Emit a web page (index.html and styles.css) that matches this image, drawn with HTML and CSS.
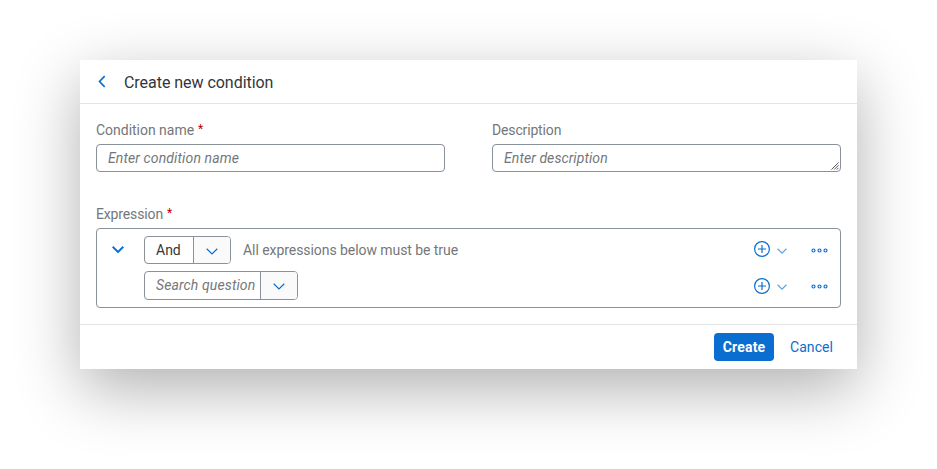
FILE: index.html
```html
<!DOCTYPE html>
<html lang="en">
<head>
<meta charset="utf-8">
<title>Create new condition</title>
<link rel="stylesheet" href="styles.css">
</head>
<body>
<svg class="sprite" aria-hidden="true">
  <symbol id="chevron" viewBox="0 0 12 7"><path d="M.7.8 6 6 11.3.8"/></symbol>
  <symbol id="plus" viewBox="0 0 16 16"><circle cx="8" cy="8" r="7.4"/><path d="M8 4v8M4 8h8"/></symbol>
  <symbol id="more" viewBox="0 0 17 5"><circle cx="2.5" cy="2.5" r="1.5"/><circle cx="8.5" cy="2.5" r="1.5"/><circle cx="14.5" cy="2.5" r="1.5"/></symbol>
</svg>
<main class="dialog">
  <header class="header">
    <svg class="icon back" viewBox="0 0 8 14"><path d="M6.9 1.2 1.3 7l5.6 5.8"/></svg>
    <h1 class="title">Create new condition</h1>
  </header>
  <section class="content">
    <div class="fields">
      <div class="field">
        <div class="label"><span class="label-name">Condition name</span><span class="required">*</span></div>
        <div class="input"><span class="placeholder name-hint">Enter condition name</span></div>
      </div>
      <div class="field">
        <div class="label"><span class="label-description">Description</span></div>
        <div class="input"><span class="placeholder description-hint">Enter description</span>
          <svg class="grip" viewBox="0 0 9 9"><path d="M.5 8.5l8-8M3.5 8.5l5-5M6.5 8.5l2-2"/></svg>
        </div>
      </div>
    </div>
    <div class="label"><span class="label-expression">Expression</span><span class="required">*</span></div>
    <div class="expression">
      <div class="row">
        <svg class="icon expand"><use href="#chevron"/></svg>
        <div class="select operator"><span class="value">And</span><span class="arrow"><svg class="icon chevron"><use href="#chevron"/></svg></span></div>
        <span class="hint">All expressions below must be true</span>
        <div class="actions">
          <svg class="icon plus"><use href="#plus"/></svg>
          <svg class="icon small"><use href="#chevron"/></svg>
          <svg class="icon more"><use href="#more"/></svg>
        </div>
      </div>
      <div class="row child">
        <div class="select question"><span class="value placeholder">Search question</span><span class="arrow"><svg class="icon chevron"><use href="#chevron"/></svg></span></div>
        <div class="actions">
          <svg class="icon plus"><use href="#plus"/></svg>
          <svg class="icon small"><use href="#chevron"/></svg>
          <svg class="icon more"><use href="#more"/></svg>
        </div>
      </div>
    </div>
  </section>
  <footer class="footer">
    <button class="button primary">Create</button>
    <button class="button link">Cancel</button>
  </footer>
</main>
</body>
</html>
```
FILE: styles.css
```css
* { box-sizing: border-box; }
body {
  margin: 0;
  height: 469px;
  padding: 60px 80px;
  overflow: hidden;
  background: #fff;
  color: #32363a;
  font: 14px/20px Roboto, "Liberation Sans", sans-serif;
}
.sprite { display: none; }
.dialog {
  width: 777px;
  height: 309px;
  background: #fff;
  box-shadow: 0 20px 60px rgba(0, 0, 0, .31);
}
.header {
  display: flex;
  align-items: center;
  height: 44px;
  padding: 1px 18px 0;
  border-bottom: 1px solid #e2e3e4;
}
.icon {
  flex: none;
  fill: none;
  stroke: #0a6ed1;
  stroke-width: 1.2;
  overflow: visible;
}
.back { width: 8px; height: 13px; margin-top: -1px; stroke-width: 1.8; }
.title { margin: 2px 0 0 18px; font-size: 16px; font-weight: 400; letter-spacing: -.04px; white-space: nowrap; }
.content { height: 220px; padding: 16px 16px 0; }
.fields { display: grid; grid-template-columns: 349px 349px; column-gap: 47px; height: 84px; }
.label { display: flex; height: 24px; color: #74777a; white-space: nowrap; }
.required { margin-left: 4px; color: #b00; font-size: 12px; line-height: 18px; }
.label-name { letter-spacing: -.02px; }
.label-description { letter-spacing: -.15px; }
.label-expression { letter-spacing: -.14px; }
.input {
  position: relative;
  display: flex;
  align-items: center;
  height: 28px;
  padding-left: 11px;
  border: 1px solid #89919a;
  border-radius: 4px;
}
.placeholder { color: #74777a; font-style: italic; }
.name-hint { letter-spacing: .12px; }
.description-hint { letter-spacing: .08px; }
.grip { position: absolute; right: 1px; bottom: 1px; width: 8px; height: 8px; fill: none; stroke: #444; stroke-width: 1; }
.expression { height: 80px; padding: 7px 13px 7px 15px; border: 1px solid #89919a; border-radius: 4px; }
.row { display: flex; align-items: center; height: 28px; }
.child { height: 29px; margin-top: 7px; padding-left: 32px; }
.expand { width: 12px; height: 7px; margin-right: 20px; margin-top: -1px; stroke-width: 1.9; }
.select {
  display: flex;
  height: 100%;
  overflow: hidden;
  border: 1px solid #89919a;
  border-radius: 4px;
}
.operator { width: 87px; }
.question { width: 154px; }
.question .value { letter-spacing: .12px; }
.value { flex: 1; padding-left: 11px; line-height: 27px; white-space: nowrap; }
.arrow { display: flex; align-items: center; justify-content: center; width: 37px; padding-top: 2px; border-left: 1px solid #89919a; background: #fafafa; }
.chevron { width: 12px; height: 7px; }
.hint { margin-left: 12px; color: #74777a; letter-spacing: -.06px; white-space: nowrap; }
.actions { display: flex; align-items: center; margin-left: auto; }
.plus { width: 16px; height: 16px; margin-top: -2px; }
.child .actions { padding-top: 2px; }
.child .plus { margin-top: -1px; }
.small { width: 10px; height: 6px; margin: 1px 23.5px 0 7px; stroke-width: 1.4; opacity: .65; }
.more { width: 17px; height: 5px; margin-right: -.5px; stroke-width: 1.2; }
.child .more { margin-top: -1px; }
.footer { display: flex; align-items: center; justify-content: flex-end; height: 45px; padding-right: 16px; border-top: 1px solid #e2e3e4; }
.button { height: 28px; padding: 0; border: 0; border-radius: 4px; font: 14px/28px Roboto, sans-serif; }
.primary { width: 60px; background: #0a6ed1; color: #fff; font-weight: 700; letter-spacing: .2px; }
.link { width: 59px; margin-left: 8px; background: none; color: #0a6ed1; letter-spacing: .08px; }
```
